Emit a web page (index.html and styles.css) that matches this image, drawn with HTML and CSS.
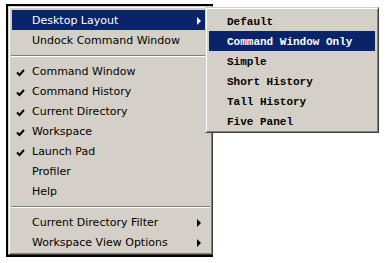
FILE: index.html
```html
<!DOCTYPE html>
<html lang="en">
<head>
  <meta charset="UTF-8">
  <title>Desktop Layout menu</title>
  <link rel="stylesheet" href="styles.css">
</head>
<body>
  <div class="stage">
    <div class="frame">
      <div class="menu main">
        <div class="item active"><span class="label">Desktop Layout</span><span class="arrow"></span></div>
        <div class="item"><span class="label">Undock Command Window</span></div>
        <div class="sep"></div>
        <div class="item checked"><span class="check"><svg width="9" height="8" viewBox="0 0 9 8"><polyline points="1,3.5 3.5,6 8,1" fill="none" stroke="#000" stroke-width="2"/></svg></span><span class="label">Command Window</span></div>
        <div class="item checked"><span class="check"><svg width="9" height="8" viewBox="0 0 9 8"><polyline points="1,3.5 3.5,6 8,1" fill="none" stroke="#000" stroke-width="2"/></svg></span><span class="label">Command History</span></div>
        <div class="item checked"><span class="check"><svg width="9" height="8" viewBox="0 0 9 8"><polyline points="1,3.5 3.5,6 8,1" fill="none" stroke="#000" stroke-width="2"/></svg></span><span class="label">Current Directory</span></div>
        <div class="item checked"><span class="check"><svg width="9" height="8" viewBox="0 0 9 8"><polyline points="1,3.5 3.5,6 8,1" fill="none" stroke="#000" stroke-width="2"/></svg></span><span class="label">Workspace</span></div>
        <div class="item checked"><span class="check"><svg width="9" height="8" viewBox="0 0 9 8"><polyline points="1,3.5 3.5,6 8,1" fill="none" stroke="#000" stroke-width="2"/></svg></span><span class="label">Launch Pad</span></div>
        <div class="item"><span class="label">Profiler</span></div>
        <div class="item"><span class="label">Help</span></div>
        <div class="sep"></div>
        <div class="item"><span class="label">Current Directory Filter</span><span class="arrow"></span></div>
        <div class="item"><span class="label">Workspace View Options</span><span class="arrow"></span></div>
      </div>
    </div>

    <!-- flyout for Desktop Layout -->
    <div class="menu sub">
      <div class="item"><span class="label">Default</span></div>
      <div class="item active"><span class="label">Command Window Only</span></div>
      <div class="item"><span class="label">Simple</span></div>
      <div class="item"><span class="label">Short History</span></div>
      <div class="item"><span class="label">Tall History</span></div>
      <div class="item"><span class="label">Five Panel</span></div>
    </div>
  </div>
</body>
</html>
```

FILE: styles.css
```css
* { margin: 0; padding: 0; box-sizing: border-box; }
html, body { background: #fff; }

.stage {
  position: relative;
  width: 387px; height: 263px;
  padding: 4px 0 0 6px;
}

/* black outline round the main menu */
.frame {
  width: 207px;
  border-top: 2px solid #000;
  border-left: 2px solid #000;
  border-bottom: 2px solid #000;
}

/* Win2000 style raised menu */
.menu {
  background: #d4d0c8;
  border: 1px solid;
  border-color: #d4d0c8 #404040 #404040 #d4d0c8;
  box-shadow: inset 1px 1px 0 #fff, inset -1px -1px 0 #808080;
}
.menu.main {
  width: 205px;
  padding: 3px 3px 2px;
  font-family: "DejaVu Sans", sans-serif;
  font-size: 11px;
}
.menu.sub {
  position: absolute; left: 205px; top: 7px;
  width: 174px;
  padding: 3px 3px 1px;
  font-family: "Liberation Mono", monospace;
  font-size: 11px; font-weight: bold;
}

.item {
  display: flex; align-items: center;
  height: 20px;
  padding: 1px 8px 0 20px;
  position: relative;
  color: #000;
}
.sub .item { padding-left: 18px; }
.item.active { background: #0a246a; color: #fff; }
.label { flex: 1; white-space: nowrap; }

.check {
  position: absolute; left: 4px; top: 8px;
  display: flex;
}

.arrow {
  width: 0; height: 0;
  border-left: 4px solid #000;
  border-top: 4px solid transparent;
  border-bottom: 4px solid transparent;
}
.item.active .arrow { border-left-color: #fff; }

.sep {
  height: 11px;
  display: flex; flex-direction: column; justify-content: center;
  margin: 0 -1px;
}
.sep::before { content: ""; display: block; border-top: 1px solid #808080; border-bottom: 1px solid #fff; }
```
